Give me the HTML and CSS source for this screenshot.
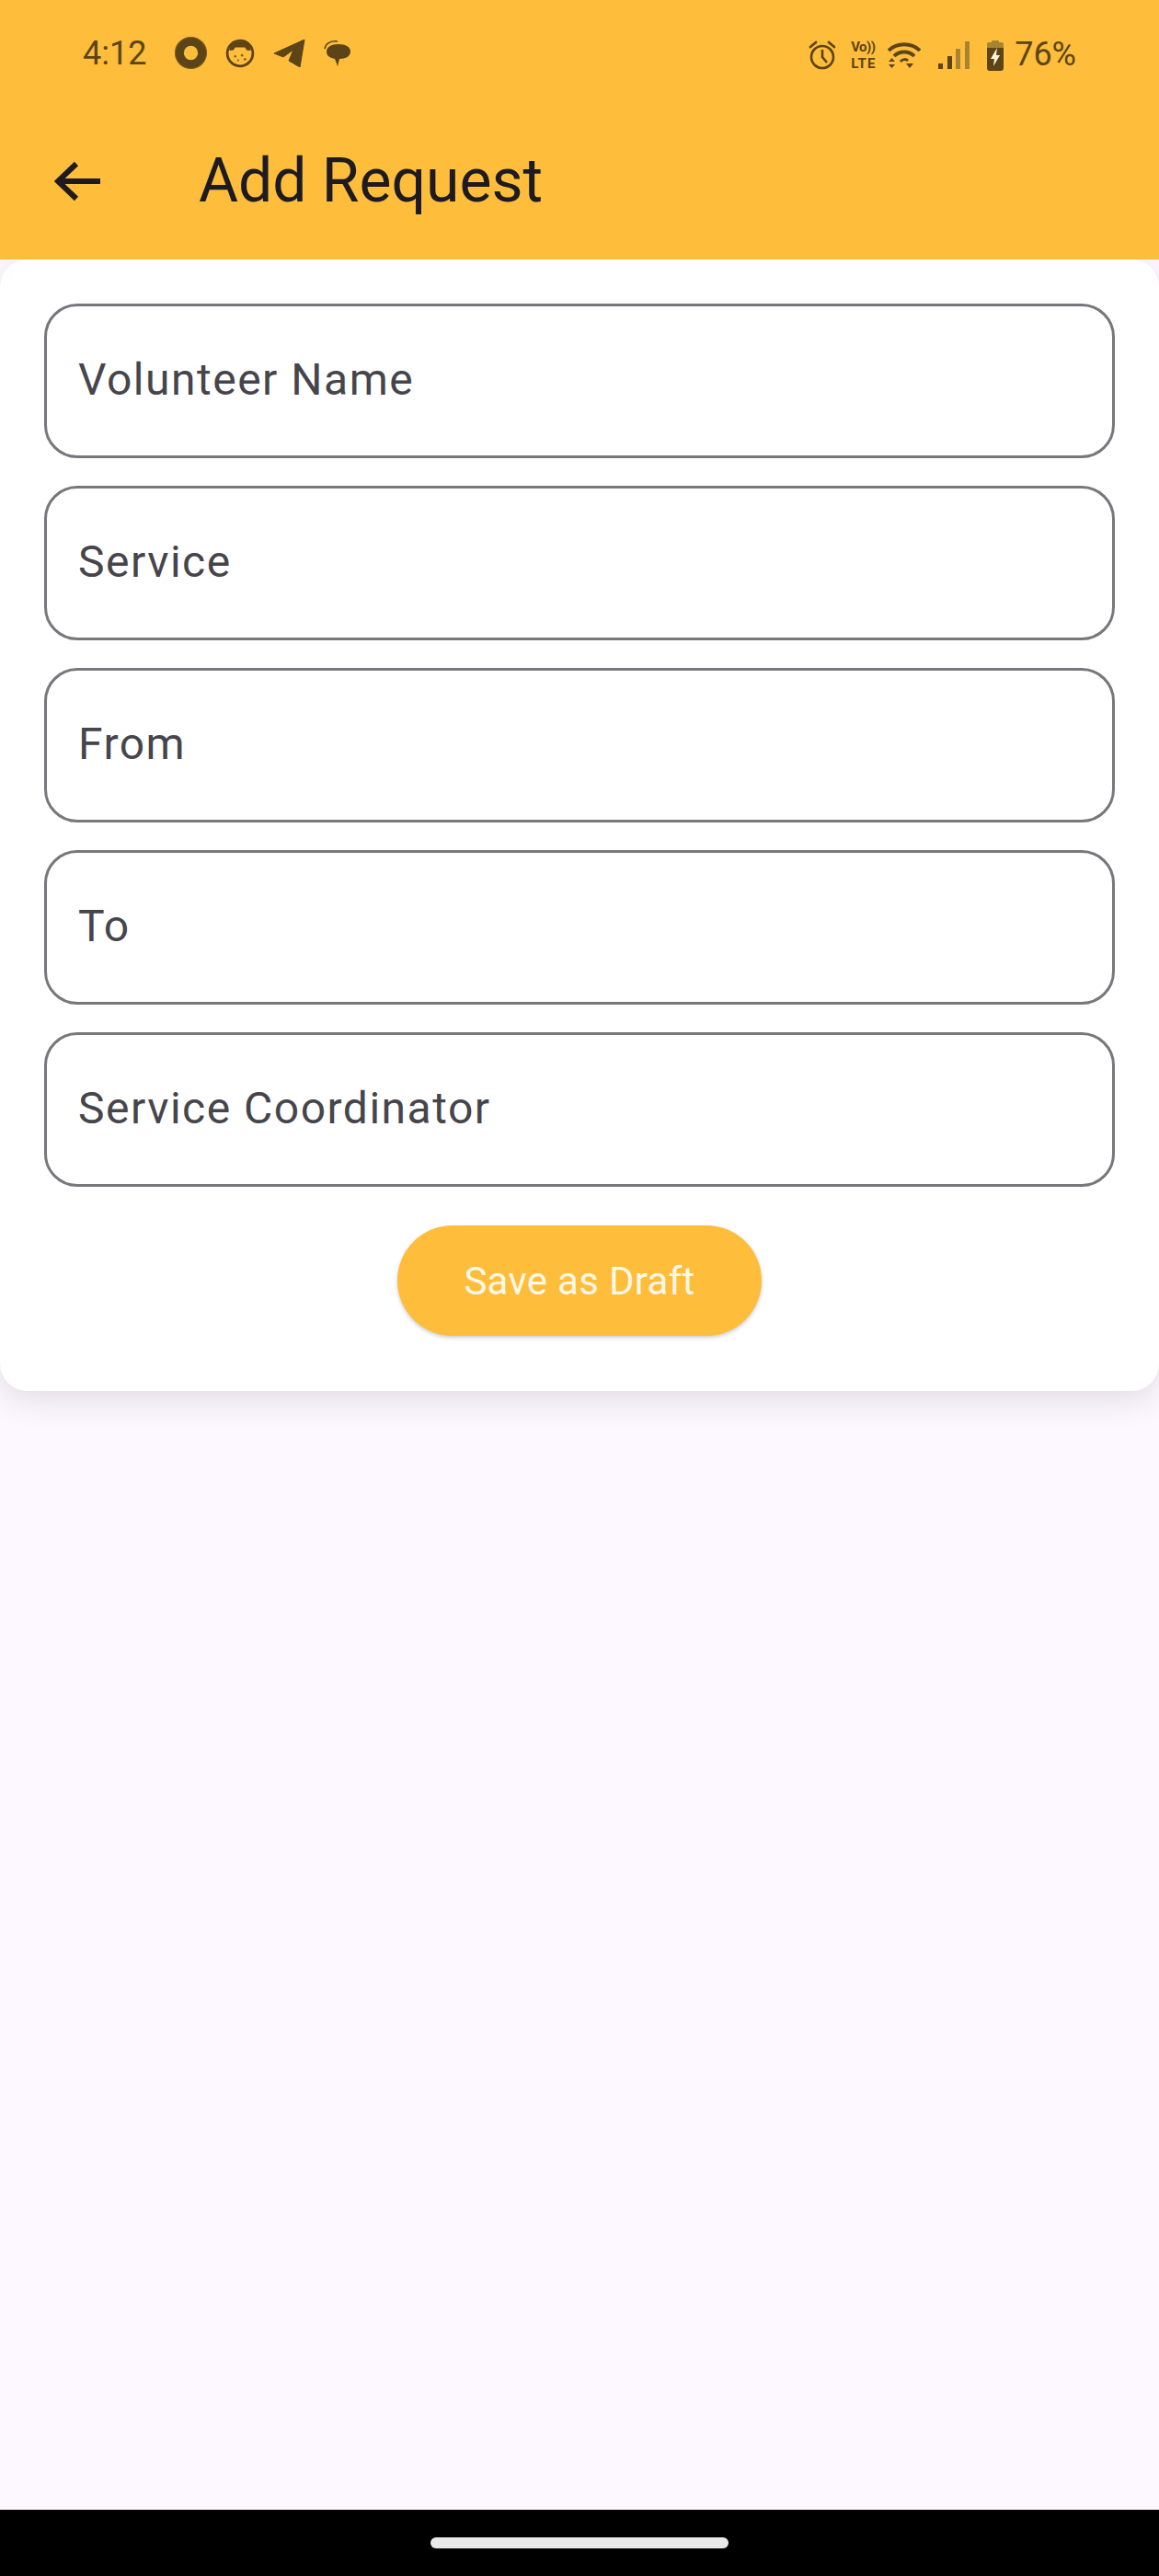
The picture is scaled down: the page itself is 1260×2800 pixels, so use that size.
FILE: index.html
```html
<!DOCTYPE html>
<html lang="en">
<head>
<meta charset="utf-8">
<title>Add Request</title>
<link rel="stylesheet" href="styles.css">
</head>
<body>
<div class="screen">
  <header class="top">
    <div class="status">
      <span class="clock">4:12</span>
      <div class="notif">
        <svg class="ic-donut" viewBox="0 0 36 36"><circle cx="18" cy="18" r="12" fill="none" stroke="#5c4416" stroke-width="9"/><circle cx="18" cy="18" r="16.6" fill="none" stroke="#7d6020" stroke-width="1"/></svg>
        <svg class="ic-cat" viewBox="0 0 30 30"><circle cx="15" cy="15" r="13" fill="none" stroke="#5c4416" stroke-width="2.6"/><path d="M4 12 C5 5 10 3 15 3 C20 3 25 5 26 12 L22 12 L20 9 L10 9 L8 12 Z" fill="#5c4416"/><circle cx="10" cy="18" r="1.2" fill="#7d6020"/><circle cx="17" cy="17" r="1.2" fill="#7d6020"/><circle cx="20" cy="21" r="1.2" fill="#7d6020"/><circle cx="13" cy="22" r="1" fill="#7d6020"/></svg>
        <svg class="ic-send" viewBox="0 0 34 30"><path d="M33 0 L28 30 L16 23 L21 11 L10 19 L0 15 Z" fill="#5c4416" stroke="#5c4416" stroke-width="1" stroke-linejoin="round"/></svg>
        <svg class="ic-chat" viewBox="0 0 30 30"><path d="M1 10 C2 4 8 1 15 2" fill="none" stroke="#5c4416" stroke-width="1.6"/><path d="M3 13 C3 8 8 5 16 5 C24 5 29 8 29 13 C29 18 24 21 17 21 L15 29 L12 21 C7 20 3 18 3 13 Z" fill="#5c4416"/></svg>
      </div>
      <div class="system">
        <svg class="ic-alarm" viewBox="0 0 30 32"><circle cx="15" cy="18" r="12" fill="none" stroke="#5c4416" stroke-width="2.6"/><path d="M15 10 V18 L20 24" fill="none" stroke="#5c4416" stroke-width="2.6"/><path d="M2 7 L8 2 M28 7 L22 2" stroke="#5c4416" stroke-width="2.8" stroke-linecap="round"/></svg>
        <span class="volte"><span class="volte-top">Vo))</span><span>LTE</span></span>
        <svg class="ic-wifi" viewBox="0 0 36 30"><path d="M1 10 C10 1 26 1 35 10" fill="none" stroke="#5c4416" stroke-width="3.8"/><path d="M7 16 C13 10 23 10 29 16" fill="none" stroke="#5c4416" stroke-width="3.8"/><path d="M14 22 C16 19 20 19 22 21" fill="none" stroke="#5c4416" stroke-width="3"/><path d="M1 22 L4.500 18 L8 22 Z M1 25 L8 25 L4.500 29 Z M20 24 H28 L24 29 Z" fill="#5c4416"/></svg>
        <svg class="ic-signal" viewBox="0 0 34 30"><rect x="0" y="24" width="5" height="6" fill="#5c4416"/><rect x="10" y="16" width="5" height="14" fill="#5c4416"/><rect x="19" y="8" width="5" height="22" fill="#a98430"/><rect x="29" y="0" width="5" height="30" fill="#a98430"/></svg>
        <svg class="ic-battery" viewBox="0 0 18 34"><path d="M5 2 a1 1 0 0 1 1 -1 h6 a1 1 0 0 1 1 1 v1 h3 a2 2 0 0 1 2 2 v8 H0 V5 a2 2 0 0 1 2 -2 h3 Z" fill="#a98430"/><path d="M0 9 H18 V31 a3 3 0 0 1 -3 3 H3 a3 3 0 0 1 -3 -3 Z" fill="#5c4416"/><path d="M11 9 L4 21 H8 L7 29 L14 17 H10 Z" fill="#fff3d6"/></svg>
        <span class="percent">76%</span>
      </div>
    </div>
    <div class="appbar">
      <svg class="back" viewBox="0 0 52 44"><path d="M50 22 H5 M24 3 L4 22 L24 41" fill="none" stroke="#1d1b20" stroke-width="6"/></svg>
      <h1 class="title">Add Request</h1>
    </div>
  </header>

  <main class="body">
    <form class="card">
      <div class="field"><span class="hint">Volunteer Name</span></div>
      <div class="field"><span class="hint">Service</span></div>
      <div class="field"><span class="hint">From</span></div>
      <div class="field"><span class="hint">To</span></div>
      <div class="field"><span class="hint">Service Coordinator</span></div>
      <button class="save" type="button">Save as Draft</button>
    </form>
  </main>

  <footer class="navbar"><span class="pill"></span></footer>
</div>
</body>
</html>
```
FILE: styles.css
```css
* { box-sizing: border-box; }

html, body {
  margin: 0;
  padding: 0;
}

body {
  font-family: Roboto, "Liberation Sans", sans-serif;
  background: #fdf7ff;
}

.screen {
  width: 1260px;
  height: 2800px;
  display: flex;
  flex-direction: column;
}

/* Header: status row plus app bar */
.top {
  height: 282px;
  flex: none;
  background: #febd3b;
  position: relative;
  z-index: 1;
}

.status {
  height: 84px;
  padding: 37px 90px 0 90px;
  display: flex;
  align-items: flex-start;
  color: #5c4416;
}

.clock {
  font-size: 36px;
  line-height: 42px;
}

.notif {
  margin-left: 30px;
  margin-top: 2px;
  display: flex;
  align-items: center;
  gap: 21px;
}

.ic-donut { width: 37px; height: 37px; }
.ic-cat { width: 32px; height: 32px; margin-left: -2px; }
.ic-send { width: 34px; height: 30px; }
.ic-chat { width: 30px; height: 30px; margin-left: -1px; }

.system {
  margin-left: auto;
  margin-top: 2px;
  display: flex;
  align-items: center;
}

.ic-alarm { width: 30px; height: 32px; }
.ic-wifi { width: 36px; height: 30px; margin-left: 9px; }
.ic-signal { width: 34px; height: 30px; margin-left: 19px; }
.ic-battery { width: 18px; height: 34px; margin-left: 19px; }

.volte {
  margin-left: 16px;
  width: 31px;
  display: flex;
  flex-direction: column;
  font-size: 15px;
  font-weight: 700;
  line-height: 18px;
  letter-spacing: 1px;
  white-space: nowrap;
}

.volte-top { letter-spacing: -0.5px; }

.percent {
  margin-left: 12px;
  margin-top: -1px;
  font-size: 36px;
  line-height: 42px;
}

.appbar {
  height: 198px;
  padding: 28px 0 0 59px;
  display: flex;
  align-items: center;
}

.back {
  width: 52px;
  height: 44px;
  flex: none;
}

.title {
  margin: 0 0 0 105px;
  font-size: 66px;
  font-weight: 400;
  line-height: 78px;
  color: #1d1b20;
}

/* Form card */
.body {
  flex: 1;
}

.card {
  height: 1230px;
  padding: 48px 48px 0;
  background: #fff;
  border-radius: 30px;
  box-shadow: 0 10px 34px rgba(40, 30, 50, 0.12);
  display: flex;
  flex-direction: column;
  gap: 30px;
}

.field {
  height: 168px;
  padding: 0 0 4px 34px;
  border: 3px solid #79767c;
  border-radius: 36px;
  display: flex;
  align-items: center;
}

.hint {
  font-size: 48px;
  letter-spacing: 1.5px;
  color: #46454c;
}

.save {
  align-self: center;
  width: 396px;
  height: 120px;
  margin-top: 12px;
  padding: 0;
  border: none;
  border-radius: 60px;
  background: #febd3b;
  color: #fff8e8;
  font: 400 42px Roboto, "Liberation Sans", sans-serif;
  letter-spacing: 0.3px;
  box-shadow: 0 2px 4px rgba(0, 0, 0, 0.2);
}

/* Gesture bar */
.navbar {
  height: 72px;
  flex: none;
  background: #000;
  display: flex;
  justify-content: center;
  padding-top: 30px;
}

.pill {
  width: 324px;
  height: 12px;
  border-radius: 6px;
  background: #e9e9e9;
}
```
